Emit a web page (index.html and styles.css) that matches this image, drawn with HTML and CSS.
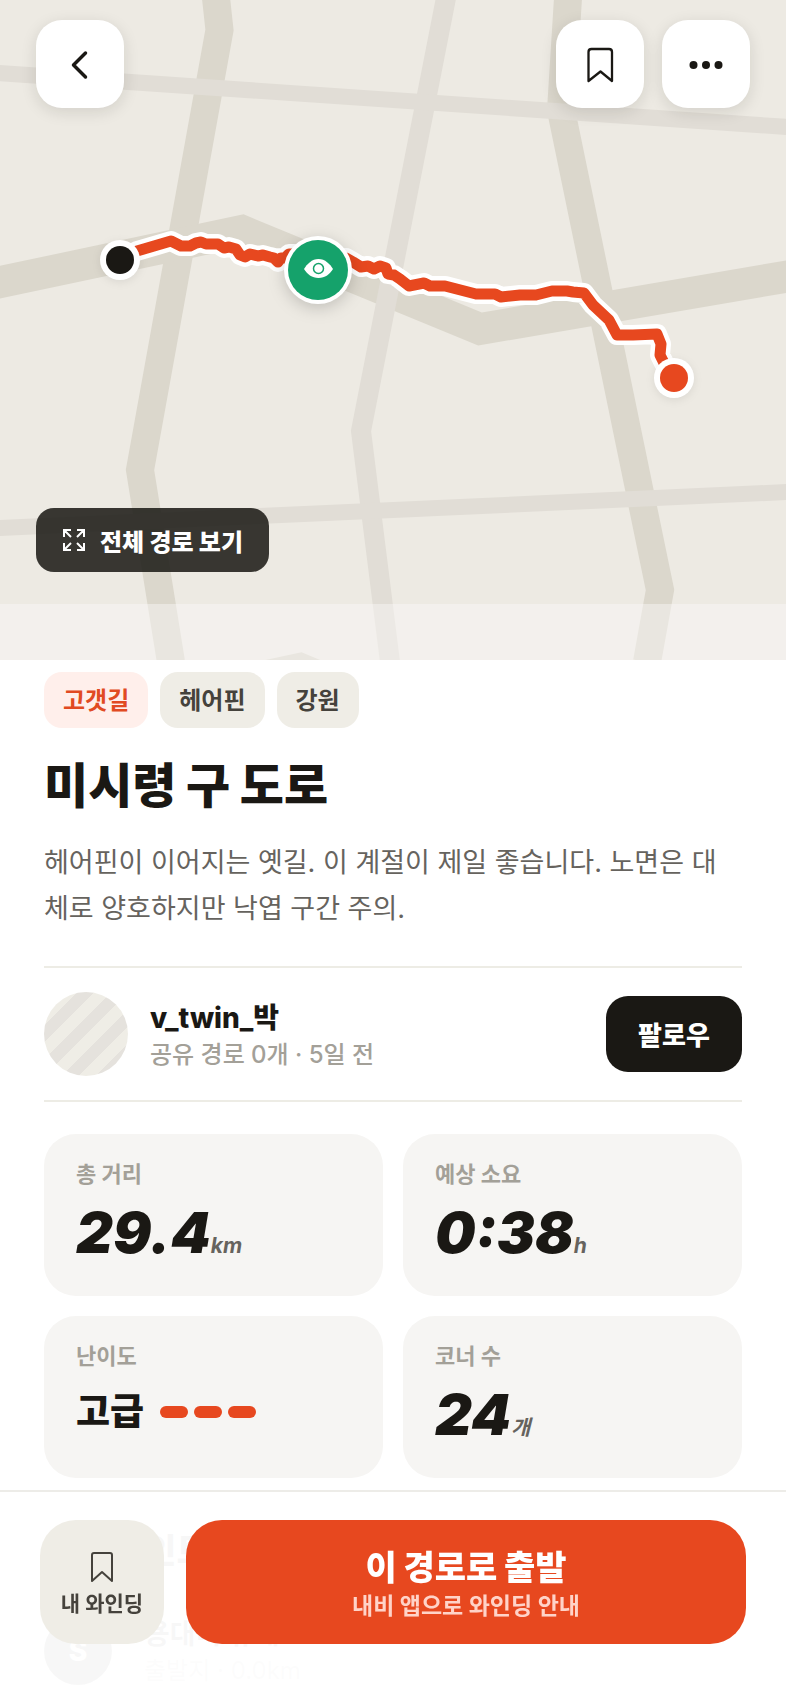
FILE: index.html
```html
<!DOCTYPE html>
<html lang="ko">
<head>
  <meta charset="UTF-8">
  <meta name="viewport" content="width=device-width, initial-scale=1">
  <title>미시령 구 도로</title>
  <link rel="stylesheet" href="styles.css">
</head>
<body>
  <div class="page">
    <header class="map">
      <svg class="map-canvas" viewBox="0 0 786 660" preserveAspectRatio="xMidYMin slice" aria-hidden="true">
        <defs>
          <path id="route" d="M120 260 L137 251 L171 241 L181 246 L190 246 L196 243 L201 242 L206 244 L218 244 L224 248 L229 247 L236 249 L240 255 L245 257 L250 254 L258 256 L263 255 L270 257 L274 258 L278 262 L281 258 L285 258 L289 254 L295 254 L318 262 L346 258 L353 262 L361 267 L368 266 L374 269 L380 266 L386 268 L388 274 L394 275 L400 279 L409 286 L424 283 L430 286 L445 286 L476 294 L495 294 L501 297 L520 295 L536 295 L552 291 L567 291 L573 292 L584 293 L593 305 L609 320 L617 335 L633 335 L657 334 L661 344 L660 355 L664 363 L674 378"/>
        </defs>
        <g class="road-major">
          <path d="M216 -2 L219.500 30 L140 470 L171 662"/>
          <path d="M568 -2 L561 110 L660 590 L647 662"/>
        </g>
        <g class="road-main">
          <path d="M-4 283 L242 231 L480 329 L790 276"/>
          <path d="M56 721 L300 669 L540 768"/>
        </g>
        <g class="road-minor">
          <path d="M446 -2 L361 431 L390 662" stroke-width="20"/>
          <path d="M-2 73 L788 127"/>
          <path d="M-2 528 L788 492"/>
        </g>
        <use class="route-edge" href="#route"/>
        <use class="route-line" href="#route"/>
        <g class="pin">
          <circle cx="120" cy="260" r="20" fill="#fff"/>
          <circle cx="120" cy="260" r="14" fill="#1a1814"/>
          <circle cx="674" cy="378" r="20" fill="#fff"/>
          <circle cx="674" cy="378" r="14" fill="#e7481f"/>
        </g>
        <g class="pin-view">
          <circle cx="318" cy="270" r="34" fill="#fff"/>
          <circle cx="318" cy="270" r="30" fill="#15a26b"/>
          <path d="M304 269 C307 264 312 259 318.500 259 C325 259 330 264 333 269 C330 274 325 278 318.500 278 C312 278 307 274 304 269 Z" fill="#fff"/>
          <circle cx="318.500" cy="268.500" r="5" fill="none" stroke="#15a26b" stroke-width="1.500"/>
        </g>
      </svg>

      <nav class="map-nav">
        <button class="icon-btn" type="button" aria-label="뒤로">
          <svg width="32" height="32" viewBox="0 0 32 32"><path d="M21.500 5 L9.500 17 L21.500 29" stroke-width="3.500"/></svg>
        </button>
        <div class="map-nav-right">
          <button class="icon-btn" type="button" aria-label="저장">
            <svg width="28" height="38" viewBox="0 0 28 38"><path d="M2.500 36 V7 Q2.500 4 5.500 4 H23 Q26 4 26 7 V36 L14.500 26.500 Z" stroke-width="2.300"/></svg>
          </button>
          <button class="icon-btn" type="button" aria-label="더보기">
            <svg width="34" height="10" viewBox="0 0 34 10"><g class="dots"><circle cx="4.500" cy="6" r="4"/><circle cx="17" cy="6" r="4"/><circle cx="29.500" cy="6" r="4"/></g></svg>
          </button>
        </div>
      </nav>

      <button class="full-route" type="button">
        <svg width="24" height="24" viewBox="0 0 24 24" aria-hidden="true">
          <path d="M2 9 V2 H9 M2 2 L9 9 M15 2 H22 V9 M22 2 L15 9 M2 15 V22 H9 M2 22 L9 15 M22 15 V22 H15 M22 22 L15 15"/>
        </svg>
        전체 경로 보기
      </button>
      <div class="map-fade"></div>
    </header>

    <main class="detail">
      <ul class="tags">
        <li class="tag tag-hot">고갯길</li>
        <li class="tag">헤어핀</li>
        <li class="tag">강원</li>
      </ul>
      <h1>미시령 구 도로</h1>
      <p class="desc">헤어핀이 이어지는 옛길. 이 계절이 제일 좋습니다. 노면은 대체로 양호하지만 낙엽 구간 주의.</p>

      <section class="author">
        <div class="avatar"></div>
        <div class="author-text">
          <div class="author-name">v_twin_박</div>
          <div class="author-meta">공유 경로 0개 · 5일 전</div>
        </div>
        <button class="follow" type="button">팔로우</button>
      </section>

      <section class="stats">
        <div class="stat">
          <div class="stat-label">총 거리</div>
          <div class="stat-value">29.4<small>km</small></div>
        </div>
        <div class="stat">
          <div class="stat-label">예상 소요</div>
          <div class="stat-value">0:38<small>h</small></div>
        </div>
        <div class="stat">
          <div class="stat-label">난이도</div>
          <div class="level">고급 <span class="bars"><i></i><i></i><i></i></span></div>
        </div>
        <div class="stat">
          <div class="stat-label">코너 수</div>
          <div class="stat-value">24<small>개</small></div>
        </div>
      </section>

      <section class="points">
        <h2>주요 포인트</h2>
        <div class="point">
          <span class="point-mark">S</span>
          <div>
            <div class="point-name">용대리 휴게소</div>
            <div class="point-meta">출발지 · 0.0km</div>
          </div>
        </div>
      </section>
    </main>

    <footer class="bottom-bar">
      <button class="save" type="button">
        <svg width="24" height="32" viewBox="0 0 24 32" aria-hidden="true"><path d="M2 30 V4 Q2 2 4 2 H20 Q22 2 22 4 V30 L12 21 Z"/></svg>
        내 와인딩
      </button>
      <button class="start" type="button">
        <span class="start-title">이 경로로 출발</span>
        <span class="start-sub">내비 앱으로 와인딩 안내</span>
      </button>
    </footer>
  </div>
</body>
</html>
```
FILE: styles.css
```css
* {
  box-sizing: border-box;
}

body {
  margin: 0;
  font-family: Inter, "Noto Sans CJK KR", sans-serif;
  background: #fff;
  color: #1a1814;
}

button {
  border: none;
  padding: 0;
  font-family: inherit;
  cursor: pointer;
}

.page {
  height: 100vh;
  overflow: hidden;
}

/* map */
.map {
  position: relative;
  height: 660px;
  padding: 20px 36px 0;
  display: flex;
  flex-direction: column;
  justify-content: space-between;
  align-items: flex-start;
  background: #edeae3;
}

.map-canvas {
  position: absolute;
  inset: 0;
  width: 100%;
  height: 100%;
}

.road-major {
  fill: none;
  stroke: #dbd7cc;
  stroke-width: 28;
}

.road-main {
  fill: none;
  stroke: #dbd7cc;
  stroke-width: 32;
}

.road-minor {
  fill: none;
  stroke: #e1ddd6;
  stroke-width: 16;
}

.route-edge {
  fill: none;
  stroke: #fff;
  stroke-width: 20;
  stroke-linejoin: round;
}

.route-line {
  fill: none;
  stroke: #e7481f;
  stroke-width: 11;
  stroke-linejoin: round;
}

.pin {
  filter: drop-shadow(0 2px 4px rgba(0, 0, 0, 0.08));
}

.pin-view {
  filter: drop-shadow(0 4px 8px rgba(0, 0, 0, 0.18));
}

.map-nav {
  position: relative;
  width: 100%;
  display: flex;
  justify-content: space-between;
}

.map-nav-right {
  display: flex;
  gap: 18px;
}

.icon-btn {
  width: 88px;
  height: 88px;
  border-radius: 26px;
  background: #fff;
  box-shadow: 0 4px 16px rgba(26, 24, 20, 0.12);
  display: flex;
  align-items: center;
  justify-content: center;
}

.icon-btn svg {
  fill: none;
  stroke: #1a1814;
  stroke-linecap: round;
  stroke-linejoin: round;
}

.icon-btn .dots {
  fill: #1a1814;
  stroke: none;
}

.full-route {
  position: relative;
  height: 64px;
  margin-bottom: 88px;
  padding: 0 26px;
  border-radius: 18px;
  background: rgba(26, 24, 20, 0.86);
  color: #fff;
  font-size: 24px;
  font-weight: 800;
  display: flex;
  align-items: center;
  gap: 14px;
}

.full-route svg {
  fill: none;
  stroke: #fff;
  stroke-width: 2;
}

.map-fade {
  position: absolute;
  left: 0;
  right: 0;
  bottom: 0;
  height: 56px;
  background: rgba(250, 249, 248, 0.45);
}

/* detail */
.detail {
  padding: 12px 44px 0;
}

.tags {
  margin: 0;
  padding: 0;
  list-style: none;
  display: flex;
  gap: 12px;
}

.tag {
  height: 56px;
  padding: 0 19px;
  border-radius: 18px;
  background: #efede6;
  color: #45423c;
  font-size: 24px;
  font-weight: 700;
  line-height: 58px;
}

.tag-hot {
  background: #ffefeb;
  color: #e14a22;
}

h1 {
  margin: 26px 0 0;
  font-size: 48px;
  font-weight: 900;
  line-height: 64px;
}

.desc {
  margin: 22px 0 0;
  padding-right: 20px;
  color: #66635e;
  font-size: 27px;
  line-height: 46px;
  word-break: break-all;
}

.author {
  margin-top: 34px;
  padding: 24px 0;
  border-top: 2px solid #edece5;
  border-bottom: 2px solid #edece5;
  display: flex;
  align-items: center;
  gap: 22px;
}

.avatar {
  width: 84px;
  height: 84px;
  border-radius: 50%;
  background: repeating-linear-gradient(135deg, #e5e2dd 0 12px, #efede6 12px 24px);
}

.author-text {
  flex: 1;
  padding-top: 4px;
}

.author-name {
  font-size: 28px;
  font-weight: 800;
  line-height: 38px;
}

.author-meta {
  color: #a3a098;
  font-size: 24px;
  font-weight: 500;
  line-height: 36px;
}

.follow {
  width: 136px;
  height: 76px;
  padding-bottom: 2px;
  border-radius: 22px;
  background: #1a1814;
  color: #fff;
  font-size: 26px;
  font-weight: 900;
}

.stats {
  margin-top: 32px;
  display: grid;
  grid-template-columns: 1fr 1fr;
  gap: 20px;
}

.stat {
  height: 162px;
  padding: 24px 32px 0;
  border-radius: 32px;
  background: #f6f5f3;
}

.stat-label {
  color: #a3a098;
  font-size: 22px;
  font-weight: 700;
  line-height: 32px;
}

.stat-value {
  margin-top: 8px;
  font-size: 57px;
  font-style: italic;
  font-weight: 900;
  line-height: 70px;
}

.stat-value small {
  color: #66635e;
  font-size: 21px;
  font-weight: 700;
}

.level {
  margin-top: 12px;
  font-size: 37px;
  font-weight: 800;
  line-height: 56px;
  display: flex;
  align-items: center;
  gap: 16px;
}

.bars {
  display: flex;
  gap: 6px;
}

.bars i {
  width: 28px;
  height: 12px;
  border-radius: 6px;
  background: #e7481f;
}

.points h2 {
  margin: 48px 0 0;
  font-size: 34px;
  font-weight: 800;
  line-height: 50px;
}

.point {
  margin-top: 38px;
  display: flex;
  align-items: center;
  gap: 32px;
}

.point-mark {
  width: 68px;
  height: 68px;
  border-radius: 50%;
  background: #1a1814;
  color: #fff;
  font-size: 28px;
  font-weight: 800;
  line-height: 68px;
  text-align: center;
}

.point-name {
  font-size: 28px;
  font-weight: 700;
  line-height: 40px;
}

.point-meta {
  color: #a3a098;
  font-size: 24px;
  line-height: 34px;
}

/* bottom bar */
.bottom-bar {
  position: fixed;
  left: 0;
  right: 0;
  bottom: 0;
  padding: 28px 40px 60px;
  border-top: 2px solid #edece8;
  background: rgba(255, 255, 255, 0.97);
  display: flex;
  gap: 22px;
}

.save {
  width: 124px;
  height: 124px;
  padding-top: 6px;
  border-radius: 36px;
  background: #efede6;
  color: #45423c;
  font-size: 21px;
  font-weight: 700;
  line-height: 30px;
  display: flex;
  flex-direction: column;
  align-items: center;
  justify-content: center;
  gap: 6px;
}

.save svg {
  fill: none;
  stroke: #45423c;
  stroke-width: 2;
  stroke-linejoin: round;
}

.start {
  flex: 1;
  height: 124px;
  padding-top: 4px;
  border-radius: 36px;
  background: #e7481f;
  color: #fff;
  display: flex;
  flex-direction: column;
  align-items: center;
  justify-content: center;
}

.start-title {
  font-size: 34px;
  font-weight: 900;
  line-height: 44px;
}

.start-sub {
  color: #ffd3c8;
  font-size: 23px;
  font-weight: 700;
  line-height: 32px;
}
```
